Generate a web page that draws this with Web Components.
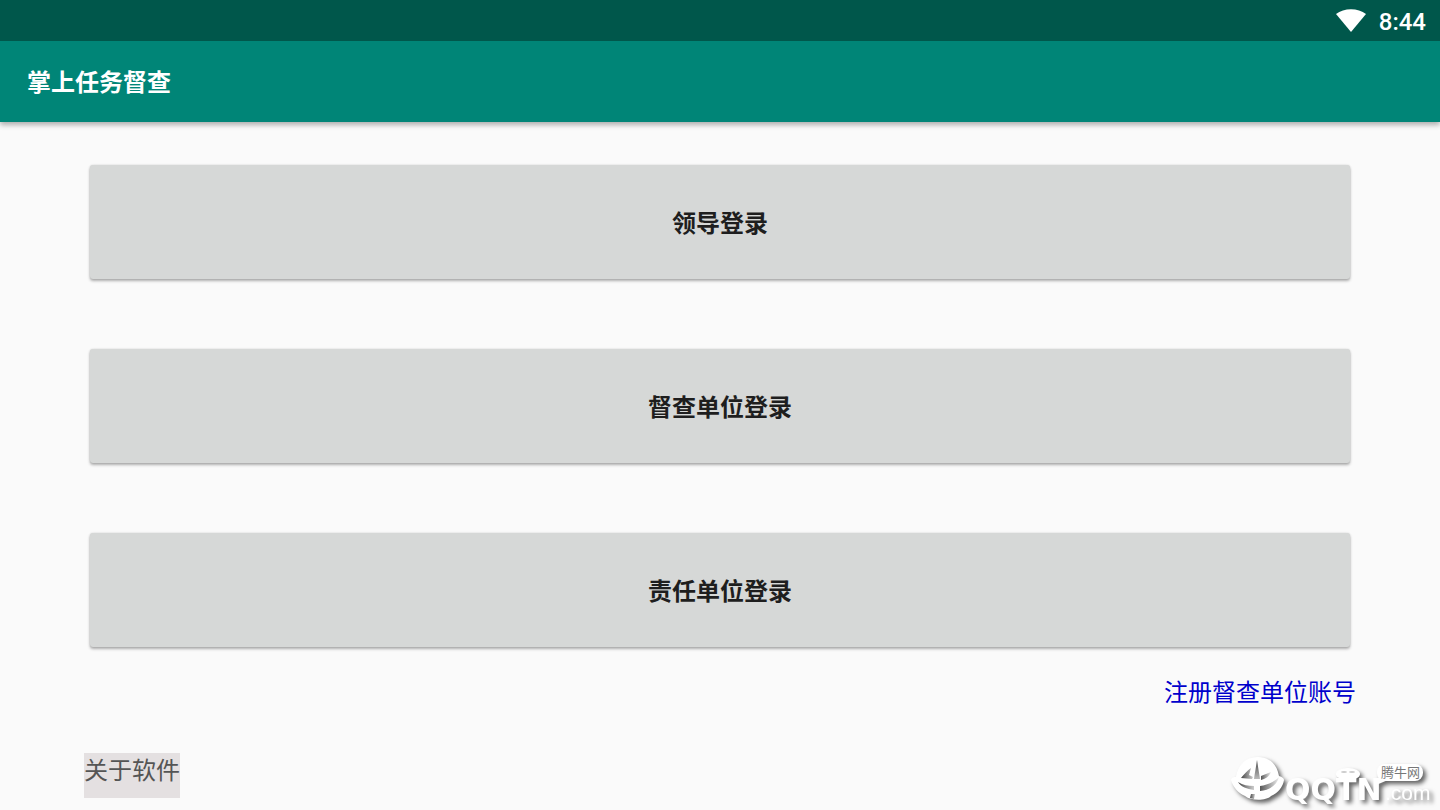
<!DOCTYPE html>
<html lang="zh-CN">
<head>
<meta charset="utf-8">
<title>掌上任务督查</title>
<style>
  body {
    margin: 0;
    background: #fafafa;
    font-family: Roboto, "Noto Sans CJK SC", sans-serif;
    font-size: 24px;
    line-height: 36px;
  }
</style>
</head>
<body>
<task-app></task-app>

<script>
class StatusBar extends HTMLElement {
  connectedCallback() {
    this.attachShadow({ mode: "open" }).innerHTML = `
      <style>
        :host {
          display: flex;
          align-items: center;
          justify-content: flex-end;
          gap: 13px;
          height: 41px;
          padding: 0 14px;
          box-sizing: border-box;
          background: #00574b;
          color: white;
          font-weight: 500;
        }
        svg {
          display: block;
        }
        time {
          padding-top: 2px;
        }
      </style>
      <svg width="30" height="24" viewBox="0 0 30 24" aria-hidden="true">
        <path fill="#fff" d="M0 5C8-1.500 22-1.500 30 5L15 23z"/>
      </svg>
      <time>${this.getAttribute("time")}</time>
    `;
  }
}

class TitleBar extends HTMLElement {
  connectedCallback() {
    this.attachShadow({ mode: "open" }).innerHTML = `
      <style>
        :host {
          display: flex;
          align-items: center;
          height: 81px;
          padding: 2px 27px 0;
          box-sizing: border-box;
          background: #008577;
          color: white;
          box-shadow: 0 3px 5px rgba(0, 0, 0, 0.3);
          clip-path: inset(0 0 -12px 0);
        }
        h1 {
          margin: 0;
          font-size: 24px;
          font-weight: 700;
        }
      </style>
      <h1><slot></slot></h1>
    `;
  }
}

class LoginButton extends HTMLElement {
  connectedCallback() {
    this.attachShadow({ mode: "open" }).innerHTML = `
      <style>
        :host {
          display: block;
        }
        button {
          display: block;
          width: 100%;
          height: 114px;
          padding: 4px 0 0;
          border: none;
          border-radius: 3px;
          background: #d6d8d7;
          color: #1e1e1e;
          font: inherit;
          font-weight: 700;
          box-shadow: 0 2px 3px rgba(0, 0, 0, 0.3), 0 0 2px rgba(0, 0, 0, 0.15);
          cursor: pointer;
        }
      </style>
      <button type="button"><slot></slot></button>
    `;
  }
}

class SiteMark extends HTMLElement {
  connectedCallback() {
    this.attachShadow({ mode: "open" }).innerHTML = `
      <style>
        :host {
          display: block;
          pointer-events: none;
        }
        svg {
          display: block;
          overflow: visible;
        }
        .shadowed {
          filter: drop-shadow(3px 3px 2px rgba(0, 0, 0, 0.6));
        }
        .name {
          font: 700 30px "DejaVu Sans", sans-serif;
        }
        .com {
          font: 400 21px "Liberation Sans", sans-serif;
        }
        .cn {
          font: 400 13px "Noto Sans CJK SC", sans-serif;
        }
      </style>
      <svg width="210" height="60" viewBox="0 0 210 60" fill="#fff">
        <defs>
          <linearGradient id="blade" x1="0" y1="0" x2="0" y2="1">
            <stop offset="0" stop-color="#444"/>
            <stop offset="1" stop-color="#bbb"/>
          </linearGradient>
          <linearGradient id="left" x1="0" y1="0" x2="1" y2="0">
            <stop offset="0" stop-color="#444"/>
            <stop offset="1" stop-color="#ccc"/>
          </linearGradient>
          <linearGradient id="right" x1="0" y1="0" x2="1" y2="0">
            <stop offset="0" stop-color="#555"/>
            <stop offset="1" stop-color="#eee"/>
          </linearGradient>
        </defs>
        <g class="shadowed">
          <path d="M28 7C39 7 47 14 49 26C52 27 54 28 54 30C53 37 48 43 41 46
            C36 51 21 51 15 46C8 43 3 37 1 30C2 27 4 27 6 27C8 14 17 7 28 7z"/>
          <ellipse cx="118" cy="24" rx="12" ry="6"/>
          <rect x="147" y="14" width="46" height="17" rx="8"/>
          <path d="M149 26L146 35L158 30z"/>
          <text class="name" x="55" y="50">QQTN</text>
          <text class="com" x="155" y="50">.com</text>
        </g>
        <path fill="url(#blade)" d="M27 10C28 17 29 22 30 29L24 29C25 22 26 17 27 10z"/>
        <path fill="url(#left)" d="M21 18L19 25L23 27L22 29L11 28C14 24 17 21 21 18z"/>
        <path fill="url(#right)" d="M31 26L41 22C39 27 35 29 31 30z"/>
        <path fill="url(#left)" d="M8 32C13 35 18 36 24 36L24 40C17 39 11 37 8 32z"/>
        <path fill="url(#right)" d="M30 36C38 35 44 32 49 27C47 35 40 40 30 41z"/>
        <path fill="url(#left)" d="M21 44L25 44L24 49L20 48z"/>
        <ellipse cx="114" cy="22" rx="3" ry="1" fill="#ccc"/>
        <ellipse cx="122" cy="22" rx="3" ry="1" fill="#ccc"/>
        <text class="cn" x="151" y="27" fill="#777">腾牛网</text>
      </svg>
    `;
  }
}

class TaskApp extends HTMLElement {
  connectedCallback() {
    this.attachShadow({ mode: "open" }).innerHTML = `
      <style>
        :host {
          display: flex;
          flex-direction: column;
          position: relative;
          min-height: 100vh;
        }
        main {
          display: flex;
          flex-direction: column;
          padding: 43px 84px 12px;
        }
        .logins {
          display: grid;
          gap: 70px;
          padding: 0 6px;
        }
        a {
          align-self: flex-end;
          margin-top: 28px;
          color: #0000cc;
          text-decoration: none;
        }
        .about {
          align-self: flex-start;
          margin-top: 42px;
          padding: 0 0 9px;
          border: none;
          background: #e4e0e1;
          color: #555;
          font: inherit;
          cursor: pointer;
        }
        site-mark {
          position: absolute;
          right: 0;
          bottom: 0;
        }
      </style>
      <status-bar time="8:44"></status-bar>
      <title-bar>掌上任务督查</title-bar>
      <main>
        <div class="logins">
          <login-button>领导登录</login-button>
          <login-button>督查单位登录</login-button>
          <login-button>责任单位登录</login-button>
        </div>
        <a href="#register">注册督查单位账号</a>
        <button class="about" type="button">关于软件</button>
      </main>
      <site-mark></site-mark>
    `;
  }
}

customElements.define("status-bar", StatusBar);
customElements.define("title-bar", TitleBar);
customElements.define("login-button", LoginButton);
customElements.define("site-mark", SiteMark);
customElements.define("task-app", TaskApp);
</script>
</body>
</html>
